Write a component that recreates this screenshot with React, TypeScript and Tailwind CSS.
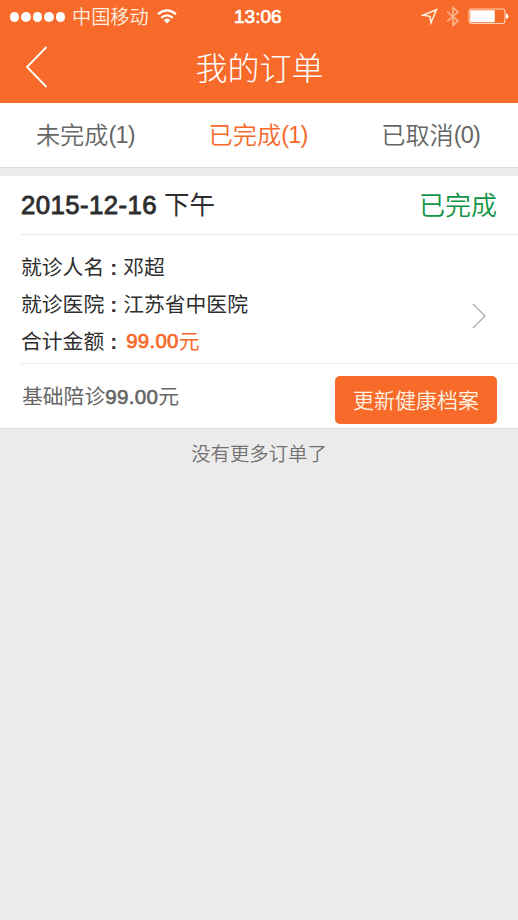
import type { ReactNode } from 'react';

function StatusBar() {
    return (
        <div className="relative h-[34px] flex items-center justify-between pl-[10px] pr-[9px]">
            <div className="flex items-center">
                <div className="flex gap-[2px]">
                    {[0, 1, 2, 3, 4].map((dot) => (
                        <span key={dot} className="w-[9.4px] h-[9.4px] rounded-full bg-white"></span>
                    ))}
                </div>
                <span className="ml-[7px] pt-px text-[19.2px] leading-[34px] font-[350] text-[#fff0e0]">中国移动</span>
                <svg className="ml-[8px] -mt-[2px]" width="20" height="15" viewBox="0 0 20 15" fill="none" stroke="white" strokeWidth="2.2">
                    <path d="M1 5.2 Q10 -2.4 19 5.2" />
                    <path d="M4.2 8.9 Q10 3.8 15.8 8.9" />
                    <path d="M6.6 11 Q10 8 13.4 11 L10 14.6 Z" fill="white" stroke="none" />
                </svg>
            </div>
            <div className="flex items-center">
                <svg className="-mt-[2px]" width="17" height="17" viewBox="0 0 17 17" fill="none" stroke="#fff0e0" strokeWidth="1.5">
                    <path d="M1.8 7.3 L15.5 1.7 L10 14.8 L9 8.3 Z" />
                </svg>
                <svg className="ml-[8px] -mt-[2px]" width="14" height="21" viewBox="0 0 14 21" fill="none" stroke="#fcb08a" strokeWidth="1.7">
                    <path d="M1.2 5.6 L12 15 L7 19.5 V1.5 L12 6 L1.2 15.4" />
                </svg>
                <svg className="ml-[8px] -mt-px" width="41" height="17" viewBox="0 0 41 17" fill="none">
                    <rect x="1" y="1" width="36" height="14.5" rx="2.5" stroke="#ffd5ba" strokeWidth="1.1" />
                    <rect x="2.2" y="2.2" width="24.6" height="12.1" rx="1" fill="white" />
                    <path d="M38 5.5 Q40.5 6 40.5 8.2 Q40.5 10.5 38 11 Z" fill="white" />
                </svg>
            </div>
            <span className="absolute left-[234px] top-0 text-[19px] leading-[34px] [-webkit-text-stroke:0.7px]">13:06</span>
        </div>
    )
}

function Tab({ label, count, active }: { label: string; count: number; active?: boolean }) {
    return (
        <button className={`flex-1 flex items-center justify-center pt-[2px] pr-[2px] font-[350] ${active ? 'text-[#f7692a]' : 'text-[#666]'}`}>
            <span className="text-[24.2px]">{label}</span>
            <span className="text-[23.5px] tracking-[-0.8px]">({count})</span>
        </button>
    )
}

function InfoRow({ label, children }: { label: string; children: ReactNode }) {
    return (
        <div className="h-[37px] flex items-center text-[20.8px] text-[#2e2e2e]">
            <span>{label}</span>
            <span className="w-[19px] pl-[6px] font-bold">:</span>
            {children}
        </div>
    )
}

function App() {
    return (
        <div className="w-[518px] h-[920px] flex flex-col bg-[#ebebeb] font-['Liberation_Sans','Noto_Sans_CJK_SC',sans-serif]">
            <header className="h-[103px] bg-[#f86a29] text-white">
                <StatusBar />
                <div className="h-[69px] px-[25px] flex items-center">
                    <svg className="-mt-[4px]" width="24" height="42" viewBox="0 0 24 42" fill="none" stroke="white" strokeWidth="1.8">
                        <path d="M21.5 1 L2 21 L21.5 41" />
                    </svg>
                    <h1 className="flex-1 text-center pr-[23px] text-[32px] leading-[48px] font-light">我的订单</h1>
                </div>
            </header>

            <nav className="h-[65px] flex bg-white border-b border-[#dcdcdc]">
                <Tab label="未完成" count={1} />
                <Tab label="已完成" count={1} active />
                <Tab label="已取消" count={0} />
            </nav>

            <section className="mt-2 h-[253px] bg-white border-b border-[#dcdcdc]">
                <div className="ml-[21px] pr-[21px] pt-px h-[59px] flex items-center justify-between border-b border-[#e8e8e8]">
                    <div className="flex items-center text-[#2e2e2e]">
                        <span className="text-[25.8px] tracking-[0.4px] [-webkit-text-stroke:0.9px]">2015-12-16</span>
                        <span className="ml-[7px] text-[25.5px]">下午</span>
                    </div>
                    <span className="pt-px text-[26px] font-[350] text-[#119546]">已完成</span>
                </div>
                <div className="ml-[21px] pr-[31px] pt-[14px] h-[129px] flex justify-between border-b border-[#ebebeb]">
                    <div>
                        <InfoRow label="就诊人名">邓超</InfoRow>
                        <InfoRow label="就诊医院">江苏省中医院</InfoRow>
                        <InfoRow label="合计金额">
                            <span className="ml-[3px] flex items-center text-[#f7692a]">
                                <span className="text-[20.4px] tracking-[0.3px] [-webkit-text-stroke:0.7px]">99.00</span>元
                            </span>
                        </InfoRow>
                    </div>
                    <svg className="mt-[54px]" width="15" height="26" viewBox="0 0 15 26" fill="none" stroke="#a3a3a3" strokeWidth="1.1">
                        <path d="M1 1 L13 13 L1 25" />
                    </svg>
                </div>
                <div className="ml-[21px] pr-[21px] pt-3 flex items-start justify-between">
                    <span className="pt-px pl-px flex items-center text-[20.8px] leading-[40px] text-[#666]">
                        基础陪诊<span className="text-[20.6px] tracking-[0.3px] [-webkit-text-stroke:0.6px]">99.00</span>元
                    </span>
                    <button className="w-[162px] h-[48px] pt-px rounded-[5px] bg-[#f86a29] text-[#fff3e3] text-[21px] font-[350]">更新健康档案</button>
                </div>
            </section>

            <p className="mt-[10px] text-center text-[19.4px] leading-[30px] font-[350] text-[#707070]">没有更多订单了</p>
        </div>
    )
}

export default App;
